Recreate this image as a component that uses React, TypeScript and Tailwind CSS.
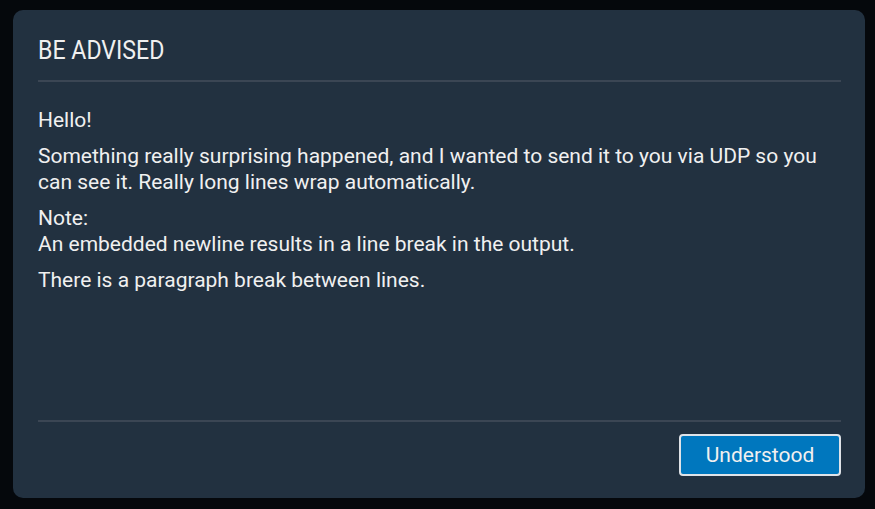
import React from 'react';

const paragraphs: React.ReactNode[] = [
  'Hello!',
  'Something really surprising happened, and I wanted to send it to you via UDP so you can see it. Really long lines wrap automatically.',
  <>
    Note:
    <br />
    An embedded newline results in a line break in the output.
  </>,
  'There is a paragraph break between lines.',
];

export default function App() {
  return (
    <div
      className="w-[875px] h-[509px] bg-[#05080c] pl-[13px] pt-[10px] pr-[10px] pb-[11px]"
      style={{ fontFamily: 'Roboto, "Noto Sans", sans-serif' }}
    >
      <div className="h-full rounded-[10px] bg-[#223140] pl-[25px] pr-[24px] flex flex-col text-[#f0f0f0]">
        {/* header */}
        <div className="pt-[25px] pb-[15px] border-b-2 border-[#3b4654]">
          <h2 className="text-[26px] leading-[30px] font-normal origin-left scale-x-[0.89] whitespace-nowrap">
            BE ADVISED
          </h2>
        </div>

        {/* body */}
        <div className="flex-1 pt-[25px] flex flex-col gap-[10px] text-[21px] leading-[26px]">
          {paragraphs.map((p, i) => (
            <p key={i}>{p}</p>
          ))}
        </div>

        {/* footer */}
        <div className="border-t-2 border-[#3b4654] pt-[12px] pb-[22px] flex justify-end">
          <button className="w-[162px] h-[42px] rounded-[4px] border-2 border-[#dfe3e8] bg-[#0077be] text-[21px] leading-[26px] text-[#f0f0f0]">
            Understood
          </button>
        </div>
      </div>
    </div>
  );
}
